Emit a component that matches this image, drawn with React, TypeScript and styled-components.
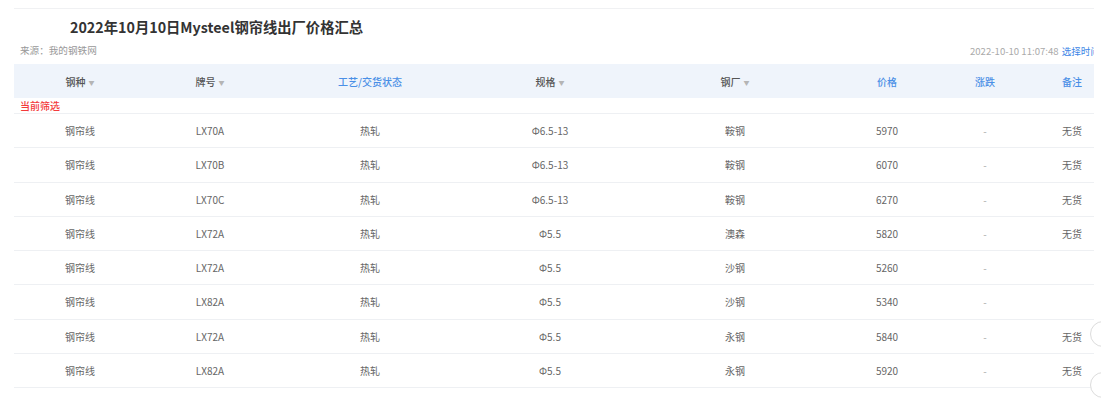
import React from "react";
import styled, { createGlobalStyle } from "styled-components";

const Global = createGlobalStyle`
  html, body { margin: 0; padding: 0; background: #fff; }
  body { font-family: "Noto Sans CJK SC", "Noto Sans", sans-serif; }
`;

const Page = styled.div`
  position: relative;
  width: 1101px;
  height: 398px;
  overflow: hidden;
  padding-top: 8px;
  box-sizing: border-box;
`;

const Frame = styled.div`
  margin-left: 14px;
  width: 1080px;
  overflow: hidden;
  border-top: 1px solid #f0f1f3;
`;

const Inner = styled.div`
  width: 1098px;
`;

const Title = styled.h1`
  margin: 0;
  padding-left: 56px;
  height: 35px;
  display: flex;
  align-items: center;
  font-size: 14.3px;
  font-weight: 700;
  color: #333;
`;

const Meta = styled.div`
  display: flex;
  justify-content: space-between;
  align-items: flex-start;
  height: 20px;
  line-height: 12px;
  padding: 0 0 0 6px;
  font-size: 9.6px;
  color: #999;
`;

const MetaRight = styled.span`
  color: #aaa;
  padding-right: 12px;
  white-space: nowrap;
  margin-top: 1px;
`;

const Link = styled.span`
  color: #3d86e6;
  margin-left: 3px;
`;

const COLS = "132px 128px 192px 168px 202px 102px 94px 80px";

const HeaderRow = styled.div`
  display: grid;
  grid-template-columns: ${COLS};
  height: 34px;
  align-items: center;
  background: #eff4fb;
`;

const HeadCell = styled.div<{ $blue?: boolean }>`
  text-align: center;
  font-size: 10px;
  font-weight: 500;
  color: ${(p) => (p.$blue ? "#4a8fe6" : "#555")};
`;

const Caret = styled.span`
  display: inline-block;
  margin-left: 3px;
  font-size: 6px;
  color: #b5b5b5;
  font-weight: 400;
  transform: translateY(-1px);
`;

const FilterRow = styled.div`
  height: 15px;
  display: flex;
  align-items: center;
  padding-left: 6px;
  font-size: 10px;
  font-weight: 500;
  color: #f33a3a;
  border-bottom: 1px solid #eef0f3;
`;

const Row = styled.div`
  display: grid;
  grid-template-columns: ${COLS};
  height: 34.25px;
  box-sizing: border-box;
  align-items: center;
  border-bottom: 1px solid #eef0f3;
`;

const Cell = styled.div<{ $light?: boolean }>`
  text-align: center;
  font-size: 10px;
  color: ${(p) => (p.$light ? "#aaa" : "#666")};
`;

const FloatBtn = styled.div<{ $top: number }>`
  position: absolute;
  left: 1090px;
  top: ${(p) => p.$top}px;
  width: 24px;
  height: 24px;
  border-radius: 50%;
  border: 1px solid #dcdcdc;
  background: #fff;
`;

const headers: { label: string; blue?: boolean; caret?: boolean }[] = [
  { label: "钢种", caret: true },
  { label: "牌号", caret: true },
  { label: "工艺/交货状态", blue: true },
  { label: "规格", caret: true },
  { label: "钢厂", caret: true },
  { label: "价格", blue: true },
  { label: "涨跌", blue: true },
  { label: "备注", blue: true },
];

const rows = [
  ["钢帘线", "LX70A", "热轧", "Φ6.5-13", "鞍钢", "5970", "-", "无货"],
  ["钢帘线", "LX70B", "热轧", "Φ6.5-13", "鞍钢", "6070", "-", "无货"],
  ["钢帘线", "LX70C", "热轧", "Φ6.5-13", "鞍钢", "6270", "-", "无货"],
  ["钢帘线", "LX72A", "热轧", "Φ5.5", "澳森", "5820", "-", "无货"],
  ["钢帘线", "LX72A", "热轧", "Φ5.5", "沙钢", "5260", "-", ""],
  ["钢帘线", "LX82A", "热轧", "Φ5.5", "沙钢", "5340", "-", ""],
  ["钢帘线", "LX72A", "热轧", "Φ5.5", "永钢", "5840", "-", "无货"],
  ["钢帘线", "LX82A", "热轧", "Φ5.5", "永钢", "5920", "-", "无货"],
];

export default function App() {
  return (
    <>
      <Global />
      <Page>
        <Frame>
          <Inner>
            <Title>2022年10月10日Mysteel钢帘线出厂价格汇总</Title>
            <Meta>
              <span>来源：我的钢铁网</span>
              <MetaRight>
                2022-10-10 11:07:48<Link>选择时间</Link>
              </MetaRight>
            </Meta>
            <HeaderRow>
              {headers.map((h) => (
                <HeadCell key={h.label} $blue={h.blue}>
                  {h.label}
                  {h.caret && <Caret>▼</Caret>}
                </HeadCell>
              ))}
            </HeaderRow>
            <FilterRow>当前筛选</FilterRow>
            {rows.map((r, i) => (
              <Row key={i}>
                {r.map((c, j) => (
                  <Cell key={j} $light={j === 6}>
                    {c}
                  </Cell>
                ))}
              </Row>
            ))}
          </Inner>
        </Frame>
        <FloatBtn $top={321} />
        <FloatBtn $top={372} />
      </Page>
    </>
  );
}
